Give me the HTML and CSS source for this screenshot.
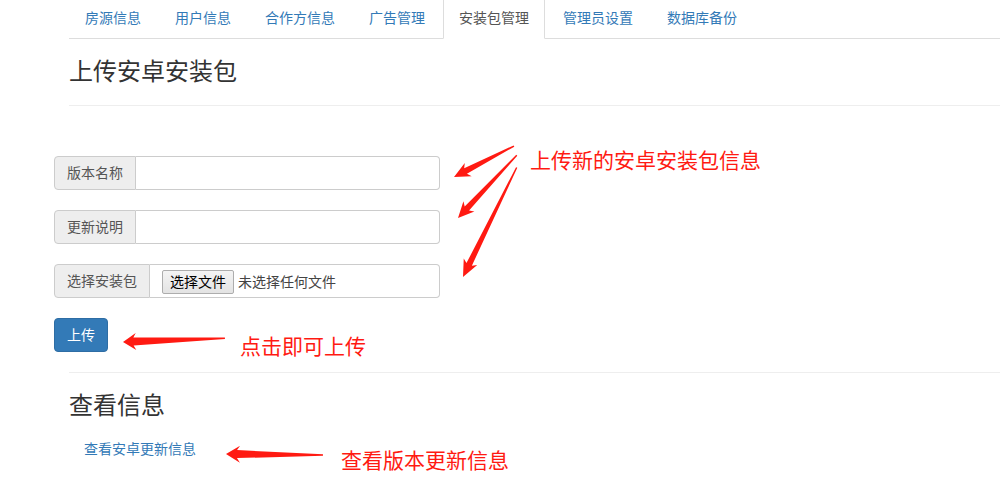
FILE: index.html
```html
<!DOCTYPE html>
<html lang="zh-CN">
<head>
<meta charset="utf-8">
<title>安装包管理</title>
<link rel="stylesheet" href="styles.css">
</head>
<body>
<div class="page">
  <ul class="tabs">
    <li><a href="#">房源信息</a></li>
    <li><a href="#">用户信息</a></li>
    <li><a href="#">合作方信息</a></li>
    <li><a href="#">广告管理</a></li>
    <li class="active"><a href="#">安装包管理</a></li>
    <li><a href="#">管理员设置</a></li>
    <li><a href="#">数据库备份</a></li>
  </ul>

  <h3 class="page-header">上传安卓安装包</h3>

  <form class="upload-form">
    <div class="input-group">
      <span class="addon">版本名称</span>
      <span class="control"></span>
    </div>
    <div class="input-group">
      <span class="addon">更新说明</span>
      <span class="control"></span>
    </div>
    <div class="input-group">
      <span class="addon">选择安装包</span>
      <span class="control file-control"><span class="file-btn">选择文件</span><span class="file-name">未选择任何文件</span></span>
    </div>
    <button type="button" class="btn-primary">上传</button>
  </form>

  <hr class="divider">

  <h3 class="section-title">查看信息</h3>
  <a class="info-link" href="#">查看安卓更新信息</a>
</div>

<div class="note note-1">上传新的安卓安装包信息</div>
<div class="note note-2">点击即可上传</div>
<div class="note note-3">查看版本更新信息</div>

<svg class="arrows" width="1000" height="487" viewBox="0 0 1000 487">
  <g fill="#ff1a12">
    <polygon transform="translate(454 177) rotate(-27.3)" points="0,0 16,-7.5 13,-3 67.5,-0.7 67.5,0.7 13,3 16,7.5"/>
    <polygon transform="translate(458 218) rotate(-46.9)" points="0,0 16,-7.5 13,-3 86,-0.7 86,0.7 13,3 16,7.5"/>
    <polygon transform="translate(463 277) rotate(-63.9)" points="0,0 17,-7.5 14,-3 122,-0.7 122,0.7 14,3 17,7.5"/>
    <polygon transform="translate(123 342) rotate(-2.1)" points="0,0 13,-8.5 10.5,-4 102,-0.8 102,0.8 10.5,4 13,8.5"/>
    <polygon transform="translate(226 454) rotate(0.6)" points="0,0 14,-8.5 11,-4 97,-0.8 97,0.8 11,4 14,8.5"/>
  </g>
</svg>
</body>
</html>
```

FILE: styles.css
```css
html, body {
  margin: 0;
  padding: 0;
  background: #fff;
}

body {
  position: relative;
  width: 1000px;
  height: 487px;
  overflow: hidden;
  font-family: "Liberation Sans", "Noto Sans CJK SC", sans-serif;
  font-size: 14px;
  line-height: 20px;
  color: #333;
}

.page {
  padding-left: 69px;
}

/* Tabs */
.tabs {
  list-style: none;
  margin: -3px 0 0 0;
  padding: 0;
  display: flex;
  border-bottom: 1px solid #ddd;
}

.tabs li {
  margin-right: 2px;
  margin-bottom: -1px;
}

.tabs a {
  display: block;
  padding: 10px 15px;
  line-height: 20px;
  border: 1px solid transparent;
  border-radius: 4px 4px 0 0;
  color: #337ab7;
  text-decoration: none;
}

.tabs .active a {
  color: #555;
  background: #fff;
  border-color: #ddd #ddd transparent;
}

/* Header */
.page-header {
  margin: 20px 0 0 0;
  padding-bottom: 20px;
  border-bottom: 1px solid #eee;
  font-size: 24px;
  line-height: 26px;
  font-weight: 400;
  color: #333;
}

/* Form */
.upload-form {
  margin: 50px 0 0 -15px;
  width: 386px;
  display: flex;
  flex-direction: column;
  align-items: flex-start;
}

.input-group {
  display: flex;
  width: 386px;
  height: 34px;
  margin-bottom: 20px;
}

.addon {
  display: flex;
  align-items: center;
  padding: 0 12px;
  background: #eee;
  border: 1px solid #ccc;
  border-radius: 4px 0 0 4px;
  color: #555;
  font-size: 14px;
  white-space: nowrap;
}

.control {
  flex: 1;
  display: flex;
  align-items: center;
  border: 1px solid #ccc;
  border-left: 0;
  border-radius: 0 4px 4px 0;
  background: #fff;
  padding: 0 12px;
}

.file-control {
  padding-left: 12px;
}

.file-btn {
  display: inline-block;
  height: 22px;
  line-height: 22px;
  padding: 0 7px;
  border: 1px solid #adadad;
  border-radius: 2px;
  background: linear-gradient(#f4f4f4, #e3e3e3);
  color: #000;
  font-size: 14px;
  margin-top: 2px;
}

.file-name {
  margin-left: 4px;
  color: #444;
  font-size: 14px;
  margin-top: 2px;
}

.btn-primary {
  height: 34px;
  padding: 0 12px;
  border: 1px solid #2e6da4;
  border-radius: 4px;
  background: #337ab7;
  color: #fff;
  font-family: inherit;
  font-size: 14px;
  line-height: 20px;
  cursor: pointer;
}

.divider {
  margin: 20px 0 0 0;
  border: 0;
  border-top: 1px solid #eee;
  height: 0;
}

.section-title {
  margin: 20px 0 0 0;
  font-size: 24px;
  line-height: 26px;
  font-weight: 400;
  color: #333;
}

.info-link {
  display: inline-block;
  margin-top: 10px;
  padding: 10px 15px;
  line-height: 20px;
  font-size: 14px;
  color: #337ab7;
  text-decoration: none;
}

/* Annotations */
.note {
  position: absolute;
  color: #ff1a12;
  font-size: 21px;
  line-height: 24px;
  font-weight: 400;
  white-space: nowrap;
}

.note-1 { left: 530px; top: 149px; }
.note-2 { left: 240px; top: 335px; }
.note-3 { left: 341px; top: 449px; }

.arrows {
  position: absolute;
  left: 0;
  top: 0;
  pointer-events: none;
}
```
